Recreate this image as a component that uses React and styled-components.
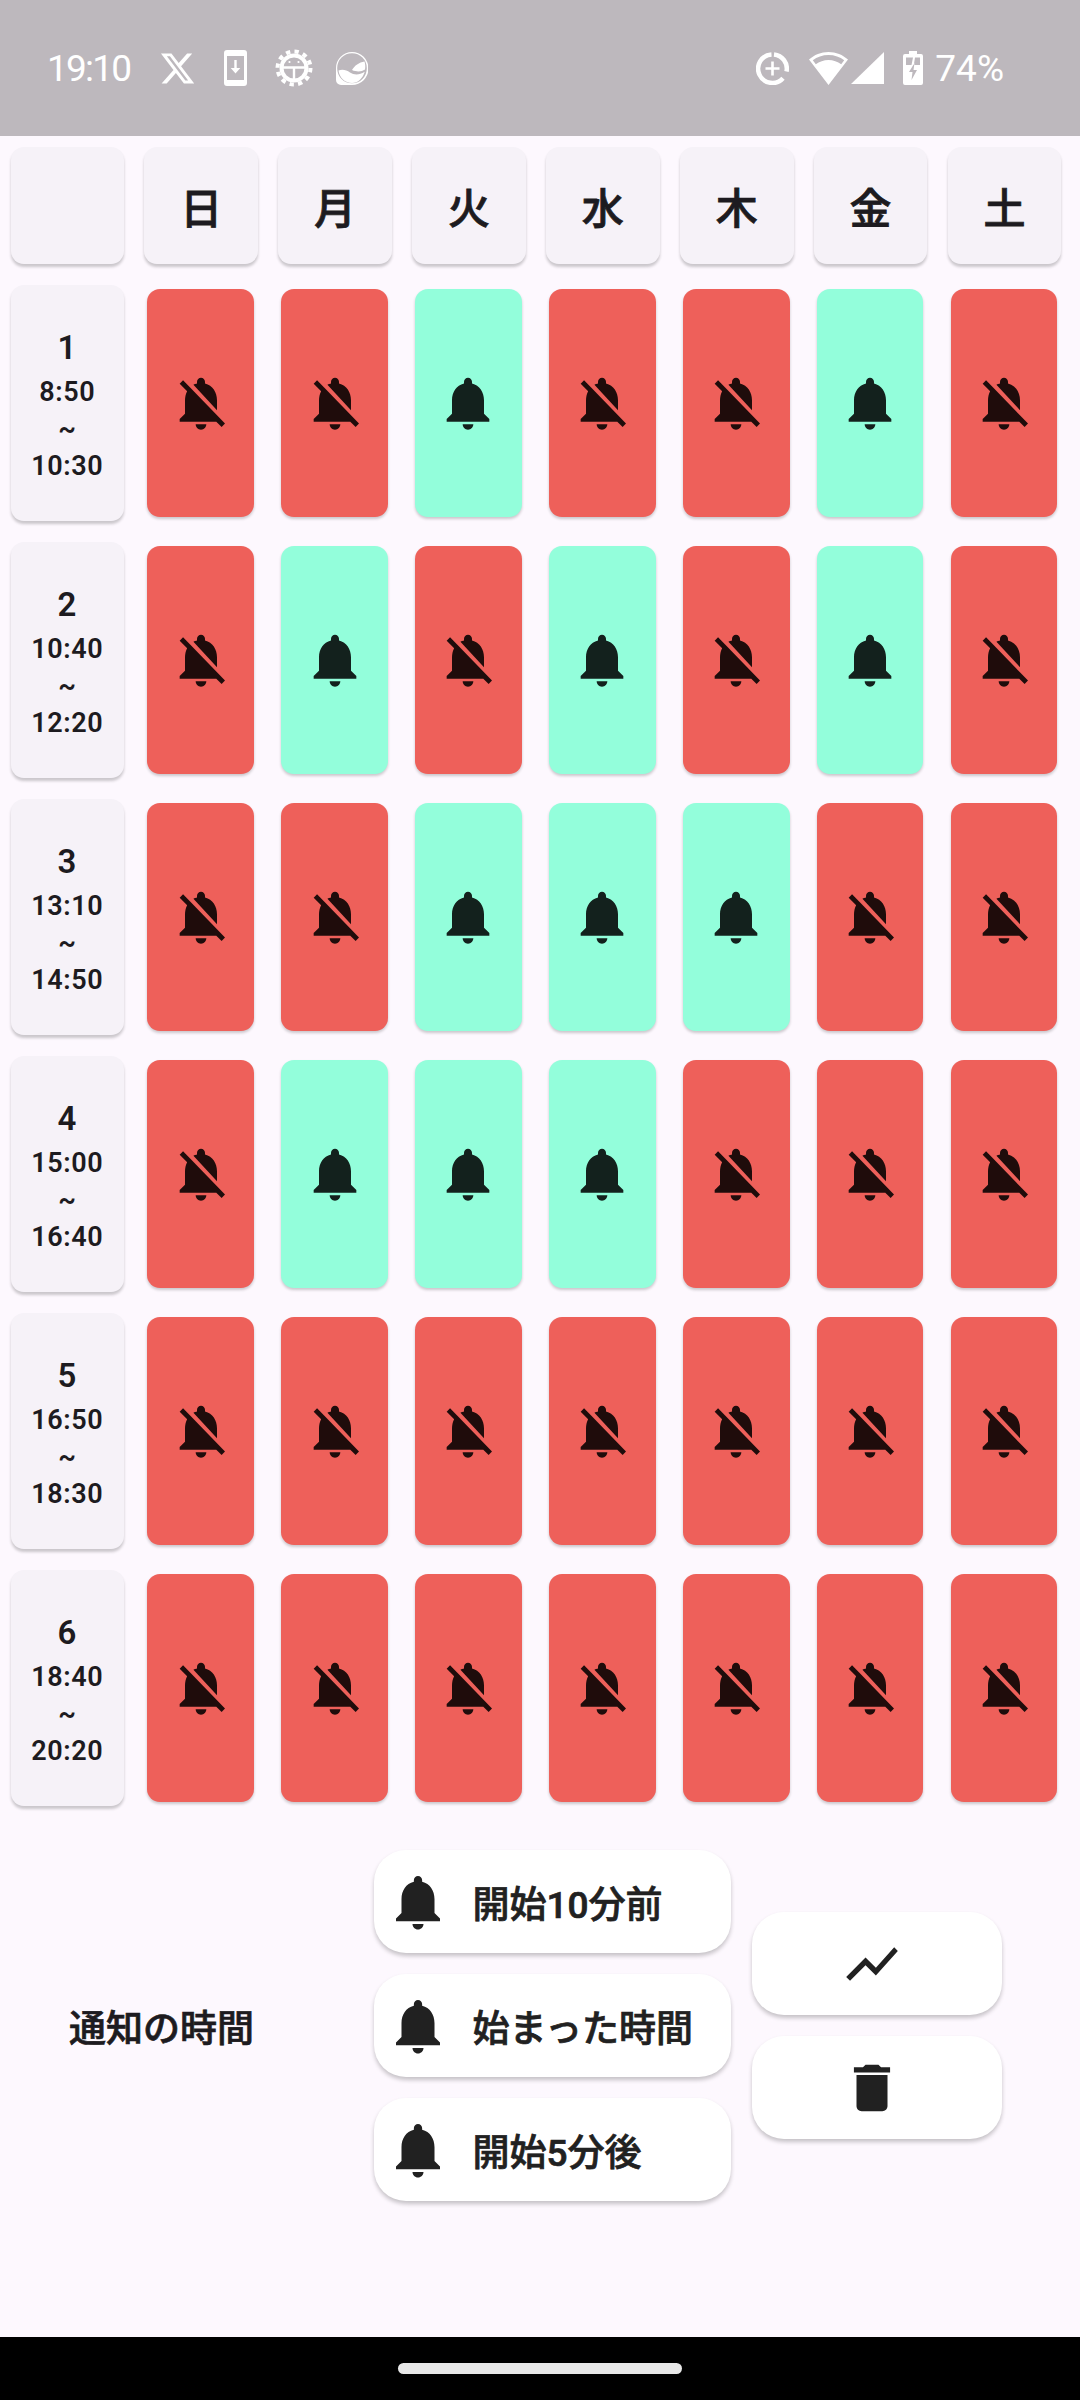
import React from "react";
import styled, { createGlobalStyle } from "styled-components";
import { FaXTwitter } from "react-icons/fa6";

const BELL = "M12 22c1.1 0 2-.9 2-2h-4c0 1.1.89 2 2 2zm6-6v-5c0-3.07-1.64-5.64-4.5-6.32V4c0-.83-.67-1.5-1.5-1.5s-1.5.67-1.5 1.5v.68C7.63 5.36 6 7.92 6 11v5l-2 2v1h16v-1l-2-2z";
const BELL_OFF = "M20 18.69L7.84 6.14 5.27 3.49 4 4.76l2.8 2.8v.01c-.52.99-.8 2.16-.8 3.42v5l-2 2v1h13.73l2 2L21 19.72l-1-1.03zM12 22c1.11 0 2-.89 2-2h-4c0 1.11.89 2 2 2zm6-7.32V11c0-3.08-1.64-5.64-4.5-6.32V4c0-.83-.67-1.5-1.5-1.5s-1.5.67-1.5 1.5v.68c-.15.03-.29.08-.42.12-.1.03-.2.07-.3.11h-.01c-.2.08-.4.17-.59.27-.01 0-.01 0-.02.01L18 14.68z";
const CHART = "M3.5 18.49l6-6.01 4 4L22 6.92l-1.41-1.41-7.09 7.97-4-4L2 16.99z";
const TRASH = "M6 19c0 1.1.9 2 2 2h8c1.1 0 2-.9 2-2V7H6v12zM19 4h-3.5l-1-1h-5l-1 1H5v2h14V4z";

const BAR_GREY = "#bdb8bd";

const GlobalStyle = createGlobalStyle`
  html, body {
    margin: 0;
    padding: 0;
    background: #fdf8fe;
    font-family: Roboto, "Noto Sans CJK JP", sans-serif;
  }
`;

const Screen = styled.div`
  width: 1080px;
  height: 2400px;
  display: flex;
  flex-direction: column;
  background: #fdf8fe;
  color: #1d1b20;
`;

const StatusBar = styled.div`
  height: 136px;
  flex: none;
  background: ${BAR_GREY};
  color: #fff;
  display: flex;
  align-items: center;
  justify-content: space-between;
  padding: 0 76px 0 47px;
`;

const StatusGroup = styled.div`
  display: flex;
  align-items: center;
`;

const StatusText = styled.span`
  font-size: ${(p) => p.$size}px;
  letter-spacing: ${(p) => p.$spacing}px;
  margin-right: ${(p) => p.$after || 0}px;
  font-family: Roboto, sans-serif;
  line-height: 1;
`;

const StatusIcon = styled.svg`
  display: block;
  margin-right: ${(p) => p.$after || 0}px;
`;

const XLogo = styled(FaXTwitter)`
  display: block;
  margin-right: 28px;
`;

const Timetable = styled.div`
  display: grid;
  grid-template-columns: repeat(8, 113.7px);
  grid-template-rows: 117px repeat(6, 236px);
  column-gap: 20.2px;
  row-gap: 21px;
  padding: 11px 0 0 10.5px;
`;

const HeadCell = styled.div`
  background: #f6f2f8;
  border-radius: 13px;
  box-shadow: 0 3px 3px rgba(0, 0, 0, 0.2);
  display: flex;
  align-items: center;
  justify-content: center;
  font-size: 42px;
  font-weight: 500;
  -webkit-text-stroke: 0.8px currentColor;
`;

const PeriodCell = styled(HeadCell)`
  flex-direction: column;
  font-size: 27px;
  font-weight: 600;
  line-height: 37px;
  letter-spacing: 0.6px;
  padding-top: 5px;
  box-sizing: border-box;
  -webkit-text-stroke: 0;
`;

const PeriodNumber = styled.div`
  font-size: 33px;
  line-height: 44px;
  margin-bottom: 4px;
`;

const Toggle = styled.div`
  margin: 4px 4px 4px 3px;
  border-radius: 13px;
  background: ${(p) => (p.$on ? "#93fedb" : "#ee605a")};
  box-shadow: 0 2px 3px rgba(0, 0, 0, 0.2);
  display: flex;
  align-items: center;
  justify-content: center;
`;

const Glyph = styled.svg`
  width: ${(p) => p.$size}px;
  height: ${(p) => p.$size}px;
  display: block;
  flex: none;
  fill: ${(p) => p.$color};
`;

const Controls = styled.div`
  display: flex;
  align-items: center;
  padding: 44px 0 0 69px;
`;

const ControlsLabel = styled.div`
  width: 304.5px;
  flex: none;
  font-size: 37px;
  font-weight: 500;
  -webkit-text-stroke: 0.7px currentColor;
`;

const ButtonColumn = styled.div`
  display: flex;
  flex-direction: column;
  gap: 21px;
  margin-right: 21px;
`;

const PillButton = styled.div`
  width: ${(p) => p.$width}px;
  height: 103px;
  box-sizing: border-box;
  background: #fff;
  border-radius: 32px;
  box-shadow: 0 3px 4px rgba(0, 0, 0, 0.22);
  display: flex;
  align-items: center;
  justify-content: ${(p) => (p.$center ? "center" : "flex-start")};
  padding: ${(p) => (p.$center ? "0 10px 0 0" : "0 0 0 11px")};
  color: #212121;
  font-size: 37px;
  font-weight: 500;
  -webkit-text-stroke: 0.7px currentColor;
`;

const ButtonText = styled.span`
  margin-left: 22px;
`;

const NavBar = styled.div`
  margin-top: auto;
  height: 63px;
  flex: none;
  background: #000;
  display: flex;
  justify-content: center;
  padding-top: 26px;
  box-sizing: border-box;
`;

const HomePill = styled.div`
  width: 284px;
  height: 11px;
  border-radius: 6px;
  background: #e8e8e8;
`;

const DAYS = ["日", "月", "火", "水", "木", "金", "土"];

const PERIODS = [
  { no: 1, from: "8:50", to: "10:30", on: [2, 5] },
  { no: 2, from: "10:40", to: "12:20", on: [1, 3, 5] },
  { no: 3, from: "13:10", to: "14:50", on: [2, 3, 4] },
  { no: 4, from: "15:00", to: "16:40", on: [1, 2, 3] },
  { no: 5, from: "16:50", to: "18:30", on: [] },
  { no: 6, from: "18:40", to: "20:20", on: [] },
];

const TIMINGS = ["開始10分前", "始まった時間", "開始5分後"];

function Icon({ path, size, color }) {
  return (
    <Glyph viewBox="0 0 24 24" $size={size} $color={color}>
      <path d={path} />
    </Glyph>
  );
}

function Status() {
  return (
    <StatusBar>
      <StatusGroup>
        <StatusText $size={37} $spacing={-1.8} $after={29}>19:10</StatusText>
        <XLogo size={37} />
        <StatusIcon width="23" height="36" viewBox="0 0 23 36" $after={28}>
          <path
            fill="#fff"
            fillRule="evenodd"
            d="M3 0h17a3 3 0 0 1 3 3v30a3 3 0 0 1-3 3H3a3 3 0 0 1-3-3V3a3 3 0 0 1 3-3zM3 6v24h17V6z"
          />
          <path fill="#fff" d="M10.3 10h2.400v8h3.600l-4.800 5.500L6.700 18h3.600z" />
        </StatusIcon>
        <StatusIcon width="38" height="38" viewBox="0 0 38 38" $after={23}>
          <circle cx="19" cy="19" r="16.500" fill="none" stroke="#fff" strokeWidth="4" strokeDasharray="4.320 4.320" />
          <circle cx="19" cy="19" r="12.500" fill="none" stroke="#fff" strokeWidth="4" />
          <circle cx="14.500" cy="13" r="1.100" fill="#fff" />
          <circle cx="23.500" cy="13" r="1.100" fill="#fff" />
          <path fill="#fff" d="M7 17.300h24v2.400H7zM17.800 18h2.400v14h-2.400z" />
        </StatusIcon>
        <StatusIcon width="32" height="33" viewBox="0 0 32 33">
          <path
            fill="#fff"
            fillRule="evenodd"
            d="M16 0a16 16 0 0 1 0 33H5a5 5 0 0 1-5-5V16A16 16 0 0 1 16 0zm0 1.200A14.800 14.800 0 0 0 1.200 16v.5a14.800 14.800 0 1 0 29.600 0V16A14.800 14.800 0 0 0 16 1.200z"
          />
          <path fill="#fff" d="M16 31C9 31 3.500 26 2.500 18.500c4-1.500 8-.5 11.500 2 4 2.500 9 3 14.700-.8C27 26 22 31 16 31z" />
          <path fill="#fff" d="M16 18c2.500-4.500 7-7.500 12.500-8.500.8 2.800 1 5.500.5 8-3.500 2.300-8 2.700-13 .5z" />
        </StatusIcon>
      </StatusGroup>
      <StatusGroup>
        <StatusIcon width="33" height="33" viewBox="0 0 33 33" $after={20}>
          <g fill="none" stroke="#fff" strokeWidth="4.500">
            <path d="M15.500 2.400A14.300 14.300 0 1 0 27 26.300" />
            <path d="M18 2.400A14.300 14.300 0 0 1 30.500 19.500" />
          </g>
          <path fill="#fff" d="M15.200 9.500h2.600v5.700h5.700v2.600h-5.700v5.700h-2.600v-5.700H9.500v-2.600h5.700z" />
        </StatusIcon>
        <StatusIcon width="39" height="33" viewBox="0 0 39 33" $after={3}>
          <path
            fill="#fff"
            fillRule="evenodd"
            d="M19.500 0c7.500 0 14.300 2.800 19.500 7.600L19.500 33 0 7.600C5.200 2.800 12 0 19.500 0zm0 3C13.500 3 8 5 3.800 8.300l3 3.900c3.500-2.700 8-4.300 12.700-4.300s9.200 1.600 12.700 4.300l3-3.900C31 5 25.500 3 19.500 3z"
          />
        </StatusIcon>
        <StatusIcon width="33" height="32" viewBox="0 0 33 32" $after={19}>
          <path fill="#fff" d="M33 0v32H0z" />
        </StatusIcon>
        <StatusIcon width="20" height="34" viewBox="0 0 20 34" $after={12}>
          <path
            fill="#fff"
            fillRule="evenodd"
            d="M6 0h8v3h4a2 2 0 0 1 2 2v27a2 2 0 0 1-2 2H2a2 2 0 0 1-2-2V5a2 2 0 0 1 2-2h4zM3 6.500v7.500h5.500l1.500-7.500zM12 6.500L10.800 14H17V6.500zM11.500 12L6 21h3.500l-1 8 5.500-10h-3.500z"
          />
        </StatusIcon>
        <StatusText $size={37} $spacing={0}>74%</StatusText>
      </StatusGroup>
    </StatusBar>
  );
}

function App() {
  return (
    <Screen>
      <GlobalStyle />
      <Status />
      <Timetable>
        <HeadCell />
        {DAYS.map((d) => (
          <HeadCell key={d}>{d}</HeadCell>
        ))}
        {PERIODS.map((p) => (
          <React.Fragment key={p.no}>
            <PeriodCell>
              <PeriodNumber>{p.no}</PeriodNumber>
              <div>{p.from}</div>
              <div>~</div>
              <div>{p.to}</div>
            </PeriodCell>
            {DAYS.map((d, i) => {
              const on = p.on.includes(i);
              return (
                <Toggle key={d} $on={on}>
                  <Icon path={on ? BELL : BELL_OFF} size={64} color="rgba(0, 0, 0, 0.87)" />
                </Toggle>
              );
            })}
          </React.Fragment>
        ))}
      </Timetable>
      <Controls>
        <ControlsLabel>通知の時間</ControlsLabel>
        <ButtonColumn>
          {TIMINGS.map((t) => (
            <PillButton key={t} $width={357}>
              <Icon path={BELL} size={66} color="#212121" />
              <ButtonText>{t}</ButtonText>
            </PillButton>
          ))}
        </ButtonColumn>
        <ButtonColumn>
          <PillButton $width={250} $center>
            <Icon path={CHART} size={62} color="#212121" />
          </PillButton>
          <PillButton $width={250} $center>
            <Icon path={TRASH} size={62} color="#212121" />
          </PillButton>
        </ButtonColumn>
      </Controls>
      <NavBar>
        <HomePill />
      </NavBar>
    </Screen>
  );
}

export default App;
